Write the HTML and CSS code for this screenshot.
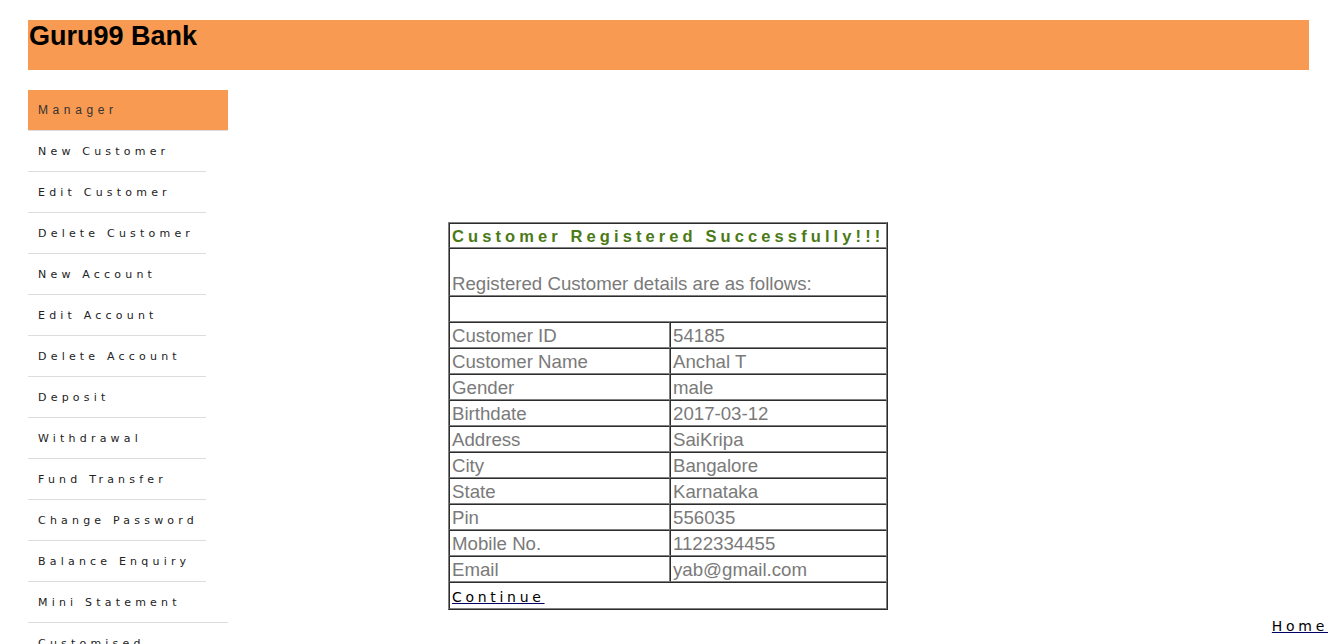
FILE: index.html
```html
<!DOCTYPE html>
<html>
<head>
<meta charset="utf-8">
<title>Guru99 Bank</title>
<link rel="stylesheet" href="styles.css">
</head>
<body>
<div class="page">
  <header class="banner"><h2 class="brand">Guru99 Bank</h2></header>
  <div class="main">
    <ul class="menu">
      <li class="menu-head">Manager</li>
      <li class="item"><a href="#">New Customer</a></li>
      <li class="item"><a href="#">Edit Customer</a></li>
      <li class="item"><a href="#">Delete Customer</a></li>
      <li class="item"><a href="#">New Account</a></li>
      <li class="item"><a href="#">Edit Account</a></li>
      <li class="item"><a href="#">Delete Account</a></li>
      <li class="item"><a href="#">Deposit</a></li>
      <li class="item"><a href="#">Withdrawal</a></li>
      <li class="item"><a href="#">Fund Transfer</a></li>
      <li class="item"><a href="#">Change Password</a></li>
      <li class="item"><a href="#">Balance Enquiry</a></li>
      <li class="item item-wide"><a href="#">Mini Statement</a></li>
      <li class="item"><a href="#">Customised Statement</a></li>
      <li class="item"><a href="#">Log out</a></li>
    </ul>
    <div class="content">
      <table class="result">
        <tr><td colspan="2" class="heading">Customer Registered Successfully!!!</td></tr>
        <tr><td colspan="2"><br>Registered Customer details are as follows:</td></tr>
        <tr><td colspan="2">&nbsp;</td></tr>
        <tr><td class="key">Customer ID</td><td>54185</td></tr>
        <tr><td class="key">Customer Name</td><td>Anchal T</td></tr>
        <tr><td class="key">Gender</td><td>male</td></tr>
        <tr><td class="key">Birthdate</td><td>2017-03-12</td></tr>
        <tr><td class="key">Address</td><td>SaiKripa</td></tr>
        <tr><td class="key">City</td><td>Bangalore</td></tr>
        <tr><td class="key">State</td><td>Karnataka</td></tr>
        <tr><td class="key">Pin</td><td>556035</td></tr>
        <tr><td class="key">Mobile No.</td><td>1122334455</td></tr>
        <tr><td class="key">Email</td><td>yab@gmail.com</td></tr>
        <tr><td colspan="2" class="cont"><a href="#">Continue</a></td></tr>
      </table>
      <div class="home"><a href="#">Home</a></div>
    </div>
  </div>
</div>
</body>
</html>
```

FILE: styles.css
```css
html, body {
  margin: 0;
  padding: 0;
  background: #fff;
}
.page {
  padding: 20px 28px 0 28px;
  font-family: "Liberation Sans", Arial, sans-serif;
}
.banner {
  background: #f89a51;
  height: 50px;
}
.brand {
  margin: 0;
  padding: 1px 0 0 1px;
  font-size: 27px;
  font-weight: bold;
  color: #000;
  line-height: 31px;
}
.main {
  display: flex;
  align-items: flex-start;
  margin-top: 20px;
  margin-right: -19px;
}
.menu {
  list-style: none;
  margin: 0;
  padding: 0;
  width: 200px;
  flex: 0 0 200px;
  font-family: "DejaVu Sans", Verdana, sans-serif;
  font-size: 11px;
  letter-spacing: 4.2px;
}
.menu-head {
  background: #f89a51;
  height: 40px;
  line-height: 40px;
  padding-left: 10px;
  color: #333;
  border-bottom: 1px solid #ddd;
  font-family: "Liberation Sans", Arial, sans-serif;
  font-size: 12px;
  letter-spacing: 4.6px;
}
.item {
  width: 178px;
  min-height: 40px;
  border-bottom: 1px solid #ddd;
}
.item-wide {
  width: 200px;
}
.item a {
  display: block;
  padding: 13px 0 12px 10px;
  line-height: 15px;
  color: #222;
  text-decoration: none;
}
.content {
  flex: 1;
  padding-top: 132px;
}
.result {
  margin-left: 220px;
  width: 440px;
  border: 1px outset #808080;
  border-spacing: 0;
  font-size: 18.67px;
  color: #7a7a7a;
}
.result td {
  border: 1px inset #808080;
  padding: 2px 1px 0 2px;
  line-height: 22px;
}
.result td.key {
  width: 216px;
}
.result td.heading {
  color: #4b7a16;
  font-weight: bold;
  font-size: 16.5px;
  letter-spacing: 4.1px;
  line-height: 21px;
  white-space: nowrap;
}
.result td.cont {
  line-height: 21px;
}
.cont a, .home a {
  font-family: "DejaVu Sans", sans-serif;
  font-size: 14px;
  letter-spacing: 3.7px;
  color: #000;
  text-decoration: underline;
  text-decoration-color: #000066;
}
.home {
  text-align: right;
  margin-top: 7px;
}
```
